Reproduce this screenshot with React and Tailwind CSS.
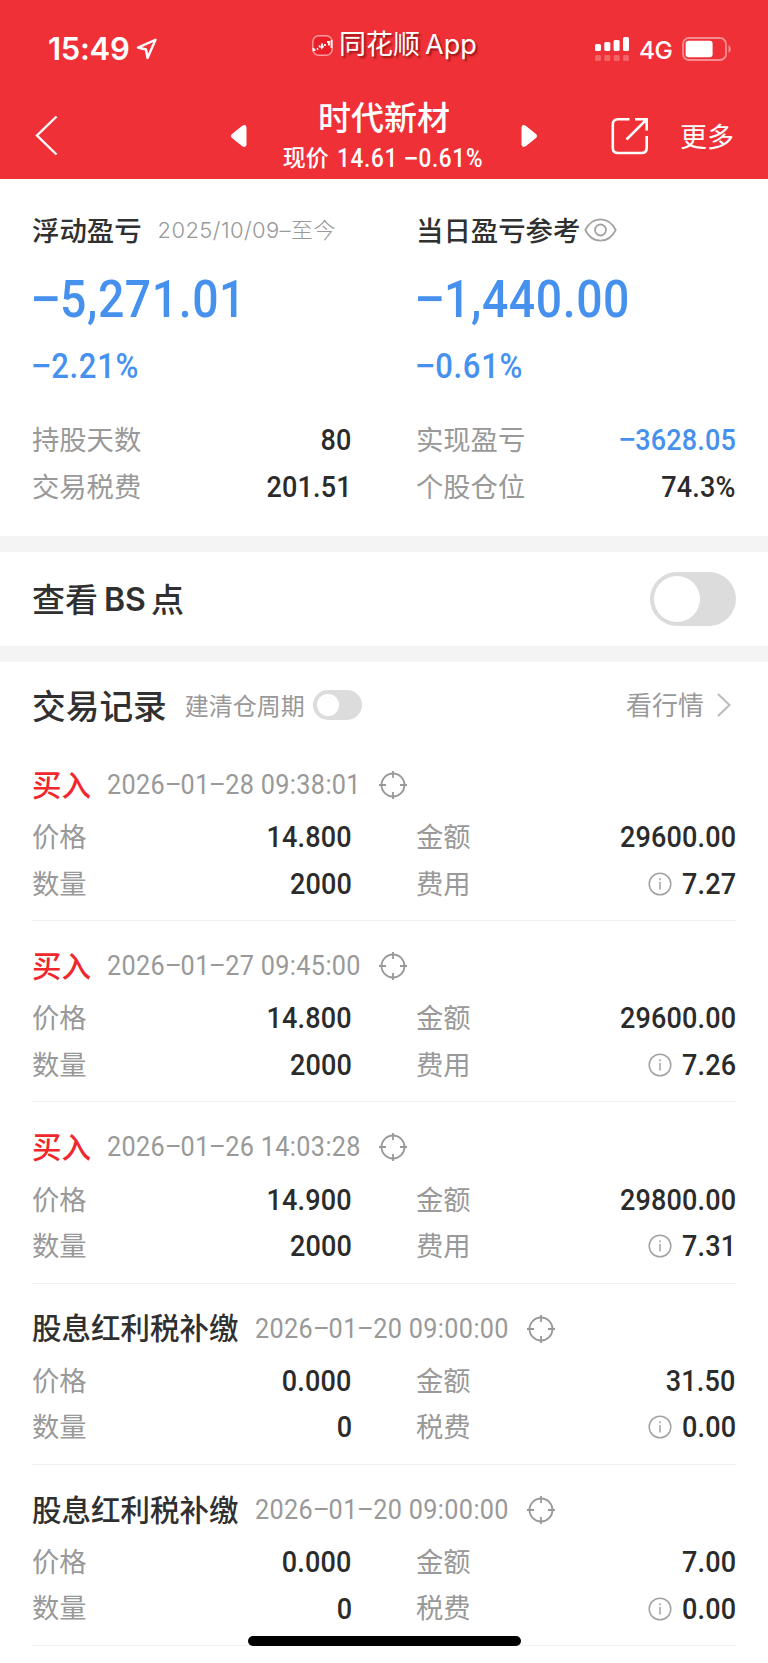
import { useState } from "react";

const records = [
    { type: "买入", buy: true, time: "2026−01−28 09:38:01", price: "14.800", amount: "29600.00", count: "2000", feeLabel: "费用", fee: "7.27" },
    { type: "买入", buy: true, time: "2026−01−27 09:45:00", price: "14.800", amount: "29600.00", count: "2000", feeLabel: "费用", fee: "7.26" },
    { type: "买入", buy: true, time: "2026−01−26 14:03:28", price: "14.900", amount: "29800.00", count: "2000", feeLabel: "费用", fee: "7.31" },
    { type: "股息红利税补缴", buy: false, time: "2026−01−20 09:00:00", price: "0.000", amount: "31.50", count: "0", feeLabel: "税费", fee: "0.00" },
    { type: "股息红利税补缴", buy: false, time: "2026−01−20 09:00:00", price: "0.000", amount: "7.00", count: "0", feeLabel: "税费", fee: "0.00" },
];

// narrow digits with a wide minus sign
function Num({ children, className }) {
    return (
        <span className={`inline-block whitespace-nowrap font-[Roboto,sans-serif] leading-none ${className}`}>
            {children.split(/(−)/).map((part, i) =>
                part === "−" ? <span key={i} className="inline-block origin-center scale-x-[1.22] px-[0.015em]">−</span> : part
            )}
        </span>
    );
}

function StatusBar() {
    return (
        <div className="flex h-[84px] items-start font-[Inter,'Noto_Sans_CJK_SC',sans-serif]">
            <div className="ml-[48px] mt-[30px] flex w-[264px] items-center">
                <span className="w-[88px] text-[31px] font-semibold leading-[38px] tracking-[-0.3px]">15:49</span>
                <svg className="h-[22px] w-[22px]" viewBox="0 0 22 22" fill="none" stroke="currentColor" strokeWidth="2.4" strokeLinejoin="round">
                    <path d="M2 9.5 19.5 1.8 11.5 20 10 11.5Z" />
                </svg>
            </div>
            <div className="mt-[27px] flex w-[283px] items-center [text-shadow:2px_2px_2px_rgba(80,0,0,0.55)]">
                <svg className="mr-[6px] h-[21px] w-[21px]" viewBox="0 0 21 21" fill="none">
                    <rect x="0.8" y="0.8" width="19.4" height="19.4" rx="6" fill="#e8202a" stroke="#f79a9d" strokeWidth="1.4" />
                    <path d="M1.5 13v2.200h2M5 14.5l1-1M7 10.5l1.5 2M10 8.5v4l1.5-1.5M13 9v2M15 7h2v3.5M19.5 5v8" stroke="#fff" strokeWidth="1.8" />
                </svg>
                <span className="text-[27px] leading-[36px]">同花顺</span>
                <span className="ml-[5px] text-[27px] leading-[36px]">App</span>
            </div>
            <div className="mt-[36px] flex items-start">
                <svg className="h-[26px] w-[35px]" viewBox="0 0 35 26" fill="currentColor">
                    <rect x="0" y="8" width="6" height="7" rx="1.5" />
                    <rect x="9.3" y="6" width="6" height="9" rx="1.5" />
                    <rect x="18.6" y="4" width="6" height="11" rx="1.5" />
                    <rect x="28" y="1" width="6" height="14" rx="1.5" />
                    <g opacity="0.25">
                        <rect x="0" y="19" width="6" height="6" rx="1.5" />
                        <rect x="9.3" y="19" width="6" height="6" rx="1.5" />
                        <rect x="18.6" y="19" width="6" height="6" rx="1.5" />
                        <rect x="28" y="19" width="6" height="6" rx="1.5" />
                    </g>
                </svg>
                <span className="ml-[9px] w-[43px] text-[24.5px] font-medium leading-[29px] tracking-[-0.5px]">4G</span>
                <svg className="h-[26px] w-[52px]" viewBox="0 0 52 26" fill="none">
                    <rect x="1" y="2" width="43" height="22" rx="6" stroke="#fff" strokeOpacity="0.45" strokeWidth="1.8" />
                    <rect x="3.6" y="4.8" width="27" height="16.4" rx="3" fill="#fff" />
                    <path d="M46.5 9v8c3-1.5 3-6.5 0-8Z" fill="#fff" fillOpacity="0.45" />
                </svg>
            </div>
        </div>
    );
}

function NavBar() {
    return (
        <div className="flex h-[95px] items-start">
            <svg className="ml-[35px] mt-[31px] h-[41px] w-[24px]" viewBox="0 0 24 41" fill="none" stroke="currentColor" strokeWidth="2.4">
                <path d="M21.5 1.5 2 20.5 21.5 39.5" />
            </svg>
            <svg className="ml-[172px] mt-[41px] h-[22px] w-[16px]" viewBox="0 0 16 22" fill="currentColor">
                <path d="M1 9 11 1q4-2.5 4.500 1.5v17q-.5 4-4.5 1.5L1 13q-2-2 0-4Z" />
            </svg>
            <div className="mt-[10px] w-[274px] text-center">
                <div className="text-[33px] font-medium leading-[44px]">时代新材</div>
                <div className="flex h-[38px] items-center justify-center">
                    <span className="mb-[2px] text-[23px] font-medium">现价</span>
                    <Num className="ml-[8px] mr-[-14px] mt-[2px] origin-left scale-x-[0.9] text-[25px] font-medium tracking-[0.8px]">14.61 −0.61%</Num>
                </div>
            </div>
            <svg className="mt-[41px] h-[22px] w-[16px] rotate-180" viewBox="0 0 16 22" fill="currentColor">
                <path d="M1 9 11 1q4-2.5 4.500 1.5v17q-.5 4-4.5 1.5L1 13q-2-2 0-4Z" />
            </svg>
            <svg className="ml-[74px] mt-[33px] h-[38px] w-[38px]" viewBox="0 0 38 38" fill="none" stroke="currentColor" strokeWidth="2.6">
                <path d="M18.5 2.3H7Q1.8 2.3 1.8 7.5V31Q1.8 36 7 36H30.5Q35.7 36 35.7 31V19M24 2.3H35.7V13.5M35.2 2.8 15.5 22.5" />
            </svg>
            <span className="ml-[31px] mt-[32px] text-[27px] leading-[40px]">更多</span>
        </div>
    );
}

function Toggle({ on, onChange, small }) {
    return (
        <button
            onClick={() => onChange(!on)}
            className={`flex items-center rounded-full ${on ? "justify-end bg-[#f03037]" : "justify-start bg-[#dcdcdc]"} ${small ? "h-[30px] w-[49px] px-[4px]" : "h-[54px] w-[86px] px-[4px]"}`}
        >
            <span className={`rounded-full bg-white ${small ? "h-[22px] w-[22px]" : "h-[46px] w-[46px]"}`} />
        </button>
    );
}

function EyeIcon() {
    return (
        <svg className="ml-[4px] h-[24px] w-[33px]" viewBox="0 0 33 24" fill="none" stroke="#a3a3a3" strokeWidth="1.8">
            <path d="M1.3 12C5 4.5 10.5 1.3 16.5 1.3S28 4.5 31.7 12C28 19.5 22.5 22.7 16.5 22.7S5 19.5 1.3 12Z" />
            <circle cx="16.5" cy="12" r="5.5" />
        </svg>
    );
}

function TargetIcon() {
    return (
        <svg className="h-[28px] w-[28px]" viewBox="0 0 28 28" fill="none" stroke="#999" strokeWidth="1.8">
            <circle cx="14" cy="14" r="11.5" />
            <path d="M14 0v7M14 21v7M0 14h7M21 14h7" />
        </svg>
    );
}

function InfoIcon() {
    return (
        <svg className="mr-[11px] h-[24px] w-[24px]" viewBox="0 0 24 24" fill="none" stroke="#a3a3a3" strokeWidth="1.5">
            <circle cx="12" cy="12" r="10.8" />
            <path d="M12 10v7.5M12 6.3v2" />
        </svg>
    );
}

function Row({ label, value, info, blue }) {
    return (
        <div className="flex h-[46.6px] items-center justify-between">
            <span className="pb-[3px] text-[27.3px] leading-none text-[#999]">{label}</span>
            <span className="flex items-center">
                {info && <InfoIcon />}
                <Num className={`-ml-[7px] origin-right scale-x-[0.9] text-[30px] font-medium tracking-[0.2px] ${blue ? "text-[#4691ee]" : "text-[#2b2b2b]"}`}>{value}</Num>
            </span>
        </div>
    );
}

function Summary({ title, extra, total, percent, children }) {
    return (
        <div>
            <div className="flex h-[48px] items-center text-[27.4px] font-medium text-[#303030]">
                {title}
                {extra}
            </div>
            <div className="flex h-[90px] items-center pt-[1px] text-[#4691ee]">
                <Num className="origin-left scale-x-[0.9] text-[51.5px] font-medium tracking-[0.65px]">{total}</Num>
            </div>
            <div className="flex h-[48px] items-center pb-[4px] text-[#4691ee]">
                <Num className="origin-left scale-x-[0.9] text-[34.5px] font-medium tracking-[0.8px]">{percent}</Num>
            </div>
            <div className="mt-[25px]">{children}</div>
        </div>
    );
}

function Record({ item }) {
    return (
        <div className="h-[181.2px] border-b border-[#f1f1f1] pt-[21px]">
            <div className="flex h-[48px] items-center">
                <span className={`pb-[3px] text-[29.5px] font-medium leading-none ${item.buy ? "text-[#f0282d]" : "text-[#303030]"}`}>{item.type}</span>
                <span className="flex w-[288px] pl-[16px]">
                    <Num className="origin-left scale-x-[0.9] text-[28px] tracking-[0.4px] text-[#999]">{item.time}</Num>
                </span>
                <TargetIcon />
            </div>
            <div className="mt-[5px] grid grid-cols-2 gap-x-[64px]">
                <Row label="价格" value={item.price} />
                <Row label="金额" value={item.amount} />
                <Row label="数量" value={item.count} />
                <Row label={item.feeLabel} value={item.fee} info />
            </div>
        </div>
    );
}

export default function App() {
    const [showBS, setShowBS] = useState(false);
    const [cycle, setCycle] = useState(false);

    return (
        <div className="relative h-[1663px] w-[768px] overflow-hidden bg-white font-['Noto_Sans_CJK_SC',sans-serif]">
            <header className="h-[179px] bg-[#f03037] text-white">
                <StatusBar />
                <NavBar />
            </header>

            <section className="grid h-[357px] grid-cols-2 gap-x-[64px] px-[32px] pt-[27px]">
                <Summary
                    title="浮动盈亏"
                    extra={<span className="ml-[16px] whitespace-nowrap font-[Inter,'Noto_Sans_CJK_SC',sans-serif] text-[22px] font-light tracking-[0.4px] text-[#999]">2025/10/09–至今</span>}
                    total="−5,271.01"
                    percent="−2.21%"
                >
                    <Row label="持股天数" value="80" />
                    <Row label="交易税费" value="201.51" />
                </Summary>
                <Summary title="当日盈亏参考" extra={<EyeIcon />} total="−1,440.00" percent="−0.61%">
                    <Row label="实现盈亏" value="−3628.05" blue />
                    <Row label="个股仓位" value="74.3%" />
                </Summary>
            </section>

            <section className="flex h-[126px] items-center justify-between border-y-[16px] border-[#f4f4f4] px-[32px]">
                <div className="flex items-center text-[33px] font-medium text-[#303030]">
                    查看
                    <span className="ml-[6px] mr-[5px] pt-[2px] font-[Inter,sans-serif] text-[32px] font-semibold">BS</span>
                    点
                </div>
                <Toggle on={showBS} onChange={setShowBS} />
            </section>

            <section className="px-[32px]">
                <div className="flex h-[78px] items-center pt-[8px]">
                    <h2 className="text-[33.7px] font-medium text-[#303030]">交易记录</h2>
                    <span className="ml-[18px] mr-[8px] text-[24px] text-[#999]">建清仓周期</span>
                    <Toggle on={cycle} onChange={setCycle} small />
                    <span className="ml-auto text-[26px] leading-none pb-[2px] text-[#999]">看行情</span>
                    <svg className="ml-[12px] mr-[4px] h-[24px] w-[16px]" viewBox="0 0 16 24" fill="none" stroke="#bbb" strokeWidth="2">
                        <path d="M2 1 13.5 12 2 23" />
                    </svg>
                </div>
                {records.map((item, i) => (
                    <Record key={i} item={item} />
                ))}
            </section>

            {/* home indicator */}
            <div className="absolute bottom-[17px] left-[248px] h-[10px] w-[273px] rounded-full bg-black" />
        </div>
    );
}
